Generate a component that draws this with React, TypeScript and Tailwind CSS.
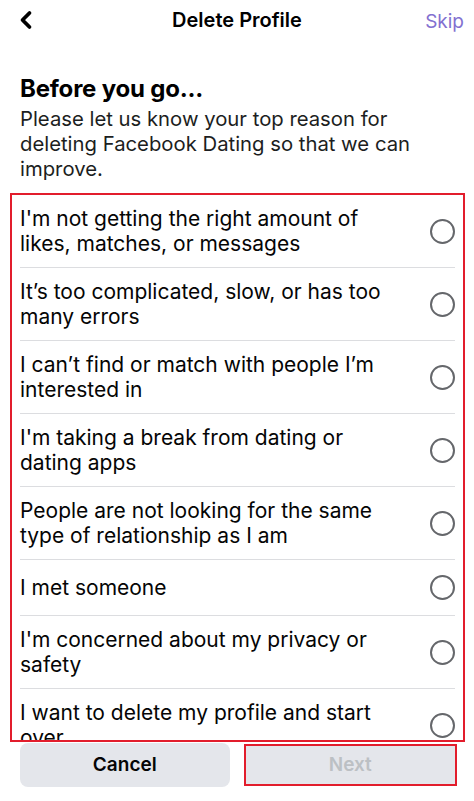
import { ChevronLeft } from "lucide-react"

const reasons = [
  "I'm not getting the right amount of\nlikes, matches, or messages",
  "It’s too complicated, slow, or has too\nmany errors",
  "I can’t find or match with people I’m\ninterested in",
  "I'm taking a break from dating or\ndating apps",
  "People are not looking for the same\ntype of relationship as I am",
  "I met someone",
  "I'm concerned about my privacy or\nsafety",
  "I want to delete my profile and start\nover",
]

export default function App() {
  return (
    <div className="w-[474px] h-[801px] overflow-hidden bg-white text-black font-['Inter',sans-serif]">
      <div className="relative flex h-[40px] items-center justify-center">
        <ChevronLeft className="absolute left-[12px] top-[6px] h-7 w-7" strokeWidth={3.2} />
        <h1 className="text-[20px] font-semibold">Delete Profile</h1>
        <span className="absolute right-[10px] top-[8px] text-[19px] text-[#8270d0]">Skip</span>
      </div>

      <div className="mt-[35px] px-5">
        <h2 className="text-[24px] leading-[28px] font-bold tracking-[-0.2px]">Before you go...</h2>
        <p className="mt-[3px] text-[20.3px] leading-[25px] text-[#1c1e21]">
          Please let us know your top reason for
          <br />
          deleting Facebook Dating so that we can
          <br />
          improve.
        </p>
      </div>

      <div className="mt-[12px] ml-[10px] mr-[9px] h-[549px] overflow-hidden border-2 border-[#e21d2c] px-2">
        {reasons.map((reason, i) => (
          <div
            key={i}
            className={`flex min-h-[56px] items-center justify-between gap-3 py-[11px] ${i < reasons.length - 1 ? "border-b border-[#dcdde0]" : ""}`}
          >
            <span className="whitespace-pre-line text-[21px] leading-[25px] text-[#050505]">{reason}</span>
            <span className="h-[25px] w-[25px] shrink-0 rounded-full border-2 border-[#65676b]" />
          </div>
        ))}
      </div>

      <div className="mt-[1px] flex gap-[14px] pl-5 pr-[17px]">
        <button className="h-[44px] flex-1 rounded-lg bg-[#e4e6eb] text-[19px] font-semibold text-[#050505]">
          Cancel
        </button>
        <button className="mt-[1px] h-[42px] flex-1 border-2 border-[#e21d2c] bg-[#e4e6eb] text-[19px] font-semibold text-[#bcc0c4]">
          Next
        </button>
      </div>
    </div>
  )
}
